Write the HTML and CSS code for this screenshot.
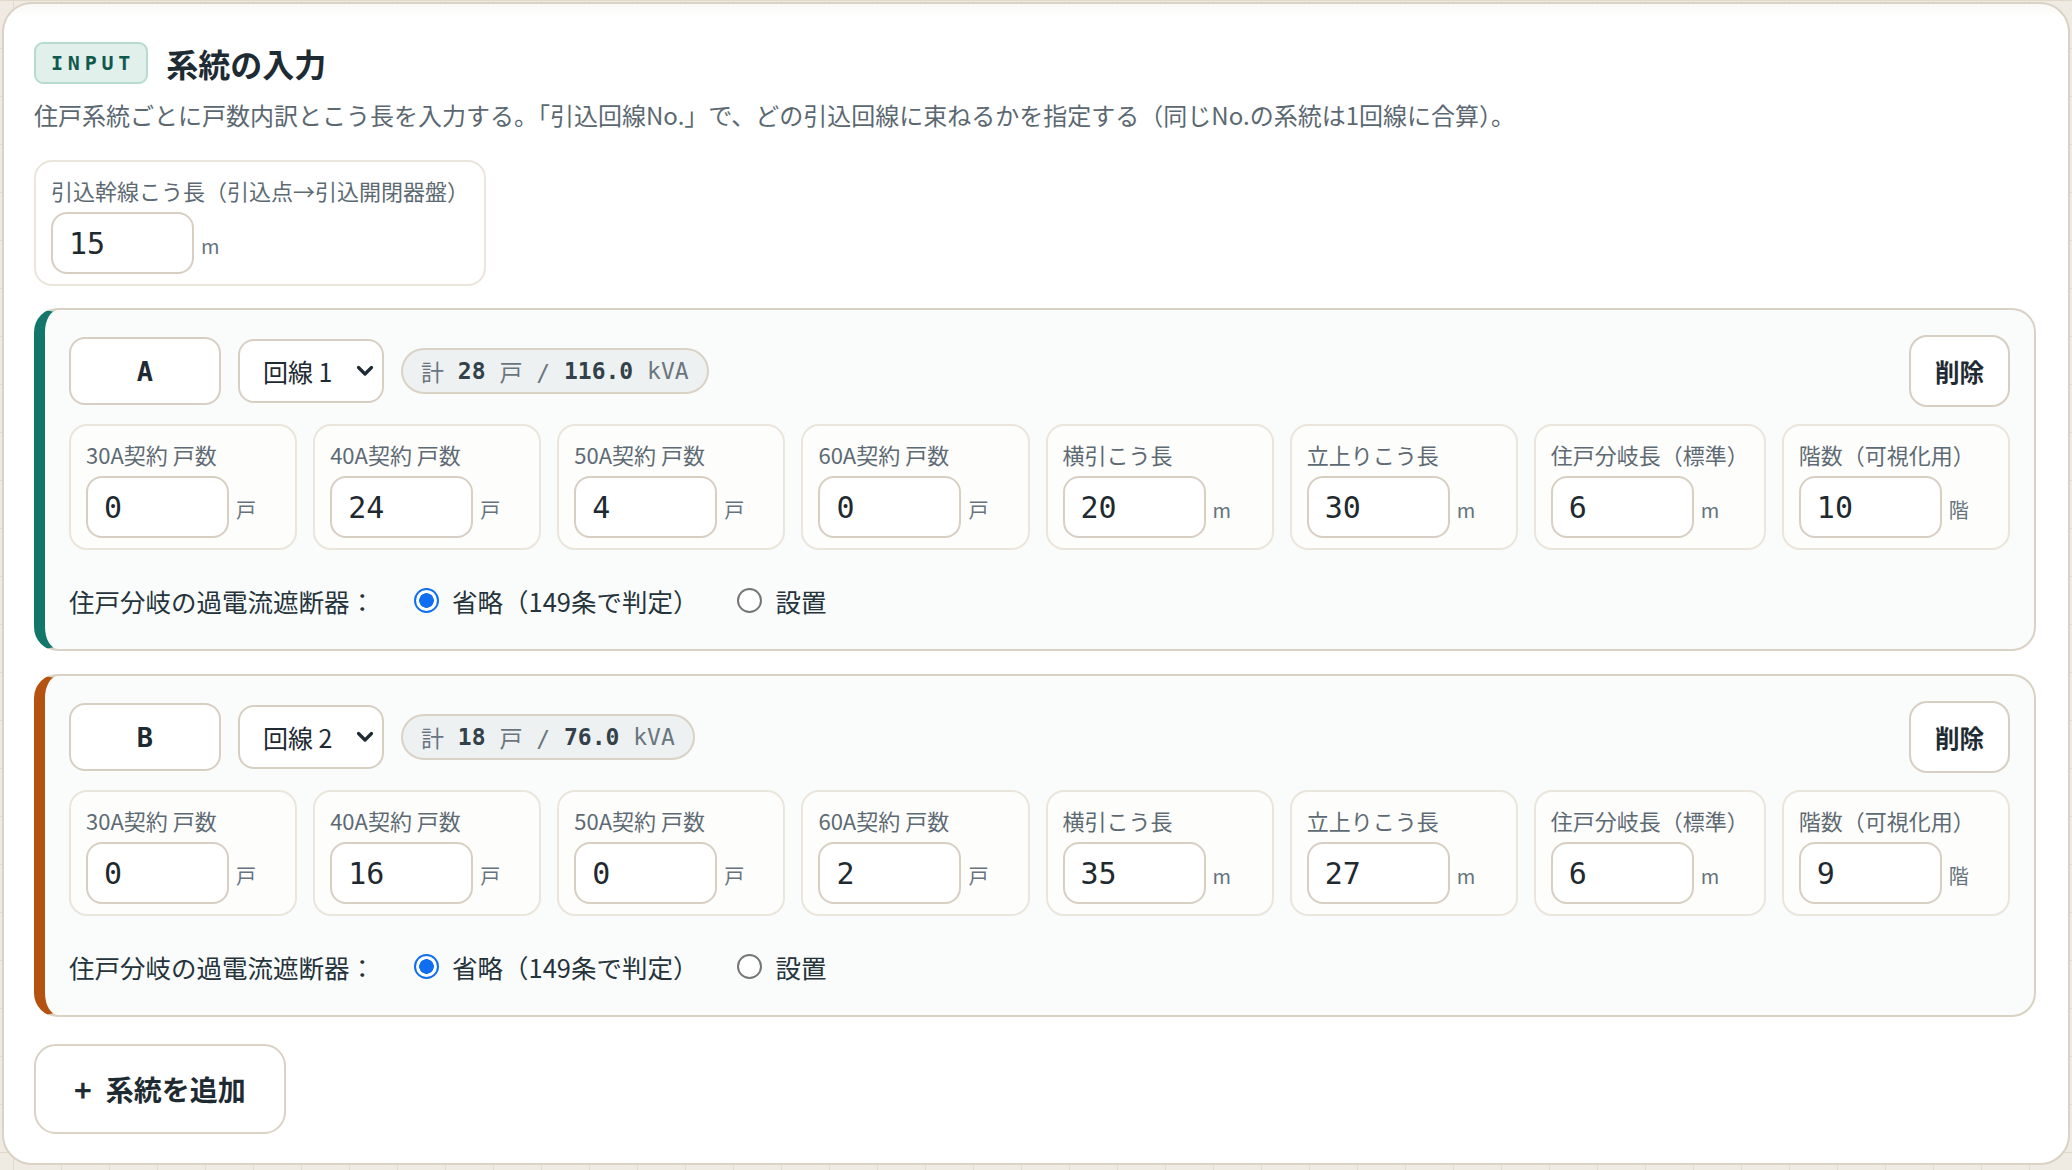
FILE: index.html
```html
<!DOCTYPE html>
<html lang="ja">
<head>
    <meta charset="UTF-8">
    <meta name="viewport" content="width=device-width, initial-scale=1.0">
    <title>系統の入力</title>
    <link rel="stylesheet" href="styles.css">
</head>
<body>
    <section class="panel">
        <div class="panel_head">
            <span class="tag">INPUT</span>
            <h2>系統の入力</h2>
        </div>
        <p class="lead">住戸系統ごとに戸数内訳とこう長を入力する。「引込回線No.」で、どの引込回線に束ねるかを指定する（同じNo.の系統は1回線に合算）。</p>

        <div class="field feed">
            <label class="field_label" for="feed_len">引込幹線こう長（引込点→引込開閉器盤）</label>
            <div class="field_row">
                <input class="num" type="number" id="feed_len" value="15">
                <span class="unit">m</span>
            </div>
        </div>

        <!-- system A -->
        <div class="system sys_a">
            <div class="sys_head">
                <input class="sys_name" type="text" value="A">
                <select class="line_sel">
                    <option selected>回線 1</option>
                    <option>回線 2</option>
                    <option>回線 3</option>
                </select>
                <span class="sum">計 <b>28</b> 戸 / <b>116.0</b> kVA</span>
                <button class="del_btn">削除</button>
            </div>
            <div class="fields">
                <div class="field">
                    <label class="field_label">30A契約 戸数</label>
                    <div class="field_row"><input class="num" type="number" value="0"><span class="unit">戸</span></div>
                </div>
                <div class="field">
                    <label class="field_label">40A契約 戸数</label>
                    <div class="field_row"><input class="num" type="number" value="24"><span class="unit">戸</span></div>
                </div>
                <div class="field">
                    <label class="field_label">50A契約 戸数</label>
                    <div class="field_row"><input class="num" type="number" value="4"><span class="unit">戸</span></div>
                </div>
                <div class="field">
                    <label class="field_label">60A契約 戸数</label>
                    <div class="field_row"><input class="num" type="number" value="0"><span class="unit">戸</span></div>
                </div>
                <div class="field">
                    <label class="field_label">横引こう長</label>
                    <div class="field_row"><input class="num" type="number" value="20"><span class="unit">m</span></div>
                </div>
                <div class="field">
                    <label class="field_label">立上りこう長</label>
                    <div class="field_row"><input class="num" type="number" value="30"><span class="unit">m</span></div>
                </div>
                <div class="field">
                    <label class="field_label">住戸分岐長（標準）</label>
                    <div class="field_row"><input class="num" type="number" value="6"><span class="unit">m</span></div>
                </div>
                <div class="field">
                    <label class="field_label">階数（可視化用）</label>
                    <div class="field_row"><input class="num" type="number" value="10"><span class="unit">階</span></div>
                </div>
            </div>
            <div class="breaker">
                <span>住戸分岐の過電流遮断器：</span>
                <label class="opt"><input type="radio" name="brk_a" checked><span>省略（149条で判定）</span></label>
                <label class="opt"><input type="radio" name="brk_a"><span>設置</span></label>
            </div>
        </div>

        <!-- system B -->
        <div class="system sys_b">
            <div class="sys_head">
                <input class="sys_name" type="text" value="B">
                <select class="line_sel">
                    <option>回線 1</option>
                    <option selected>回線 2</option>
                    <option>回線 3</option>
                </select>
                <span class="sum">計 <b>18</b> 戸 / <b>76.0</b> kVA</span>
                <button class="del_btn">削除</button>
            </div>
            <div class="fields">
                <div class="field">
                    <label class="field_label">30A契約 戸数</label>
                    <div class="field_row"><input class="num" type="number" value="0"><span class="unit">戸</span></div>
                </div>
                <div class="field">
                    <label class="field_label">40A契約 戸数</label>
                    <div class="field_row"><input class="num" type="number" value="16"><span class="unit">戸</span></div>
                </div>
                <div class="field">
                    <label class="field_label">50A契約 戸数</label>
                    <div class="field_row"><input class="num" type="number" value="0"><span class="unit">戸</span></div>
                </div>
                <div class="field">
                    <label class="field_label">60A契約 戸数</label>
                    <div class="field_row"><input class="num" type="number" value="2"><span class="unit">戸</span></div>
                </div>
                <div class="field">
                    <label class="field_label">横引こう長</label>
                    <div class="field_row"><input class="num" type="number" value="35"><span class="unit">m</span></div>
                </div>
                <div class="field">
                    <label class="field_label">立上りこう長</label>
                    <div class="field_row"><input class="num" type="number" value="27"><span class="unit">m</span></div>
                </div>
                <div class="field">
                    <label class="field_label">住戸分岐長（標準）</label>
                    <div class="field_row"><input class="num" type="number" value="6"><span class="unit">m</span></div>
                </div>
                <div class="field">
                    <label class="field_label">階数（可視化用）</label>
                    <div class="field_row"><input class="num" type="number" value="9"><span class="unit">階</span></div>
                </div>
            </div>
            <div class="breaker">
                <span>住戸分岐の過電流遮断器：</span>
                <label class="opt"><input type="radio" name="brk_b" checked><span>省略（149条で判定）</span></label>
                <label class="opt"><input type="radio" name="brk_b"><span>設置</span></label>
            </div>
        </div>

        <button class="add_btn"><span class="plus">+</span>系統を追加</button>
    </section>
</body>
</html>
```

FILE: styles.css
```css
* {
    margin: 0;
    padding: 0;
    box-sizing: border-box;
}

body {
    margin: 2px;
    background-color: #efebe3;
    background-image: linear-gradient(90deg, #e0d9cc 1px, transparent 1px),
        linear-gradient(#e0d9cc 1px, transparent 1px);
    background-size: 48px 48px;
    background-position: 13px 0;
    font-family: "Noto Sans CJK JP", "Noto Sans", sans-serif;
    color: #1f2b33;
}

.panel {
    background: linear-gradient(#f8f8f6, #fff 14px);
    border: 2px solid #d9d2c5;
    border-radius: 30px;
    padding: 38px 32px 29px 30px;
}

.panel_head {
    display: flex;
    align-items: center;
    gap: 18px;
    height: 42px;
}

.tag {
    display: flex;
    align-items: center;
    height: 42px;
    padding: 0 11px 0 15px;
    background-color: #e2f0ec;
    border: 2px solid #b8dbd1;
    border-radius: 9px;
    color: #0f5a4d;
    font-family: "DejaVu Sans Mono", monospace;
    font-weight: bold;
    font-size: 20px;
    letter-spacing: 0.24em;
}

.panel_head h2 {
    font-size: 32px;
    font-weight: 700;
    color: #1f2b33;
}

.lead {
    margin-top: 14px;
    font-size: 24px;
    line-height: 34px;
    color: #5b6871;
    white-space: nowrap;
}

/* shared input box */
.field {
    border: 2px solid #ebe6dc;
    border-radius: 18px;
    background-color: #fdfdfc;
    padding: 14px 15px 10px;
}

.feed {
    width: fit-content;
    margin-top: 28px;
    background-color: #fff;
}

.field_label {
    display: block;
    font-size: 22px;
    line-height: 28px;
    color: #5d6a73;
    white-space: nowrap;
}

.field_row {
    display: flex;
    align-items: baseline;
    gap: 7px;
    margin-top: 8px;
}

.num {
    width: 143px;
    height: 62px;
    padding: 0 12px 0 16px;
    border: 2px solid #d7cfc2;
    border-radius: 16px;
    background: #fff;
    font-family: "DejaVu Sans Mono", monospace;
    font-size: 30px;
    color: #1f2a30;
    outline: none;
    -moz-appearance: textfield;
}

.num::-webkit-inner-spin-button,
.num::-webkit-outer-spin-button {
    -webkit-appearance: none;
    margin: 0;
}

.unit {
    font-size: 20px;
    color: #66737c;
}

/* system group */
.system {
    margin-top: 22px;
    background-color: #fafbfb;
    border: 2px solid #d9d2c4;
    border-left: 11px solid #13766a;
    border-radius: 24px;
    padding: 25px 24px 31px 24px;
}

.system + .system {
    margin-top: 23px;
}

.sys_b {
    border-left-color: #b4520f;
}

.sys_head {
    display: flex;
    align-items: center;
    gap: 17px;
    height: 72px;
}

.sys_name {
    width: 152px;
    height: 68px;
    border: 2px solid #d7cfc2;
    border-radius: 16px;
    background: #fff;
    text-align: center;
    font-family: "DejaVu Sans Mono", monospace;
    font-weight: bold;
    font-size: 27px;
    color: #1f2b33;
    outline: none;
}

.line_sel {
    -webkit-appearance: none;
    appearance: none;
    width: 146px;
    height: 64px;
    padding-left: 23px;
    border: 2px solid #d7cfc2;
    border-radius: 16px;
    background: #fff url("data:image/svg+xml,%3Csvg xmlns='http://www.w3.org/2000/svg' viewBox='0 0 18 12'%3E%3Cpolyline points='2.5,2.5 9,9 15.5,2.5' fill='none' stroke='%231f2b33' stroke-width='3.2' stroke-linecap='round' stroke-linejoin='round'/%3E%3C/svg%3E") no-repeat right 8px center / 18px 12px;
    font-family: "Noto Sans CJK JP", sans-serif;
    font-size: 25px;
    color: #1f2b33;
    outline: none;
}

.sum {
    display: flex;
    align-items: center;
    height: 46px;
    padding: 0 18px;
    border: 2px solid #d9d2c5;
    border-radius: 23px;
    background-color: #eef1f2;
    font-family: "DejaVu Sans Mono", "Noto Sans CJK JP", monospace;
    font-size: 23px;
    color: #6a767e;
    white-space: pre;
}

.sum b {
    color: #33414a;
}

.del_btn {
    margin-left: auto;
    height: 72px;
    padding: 0 24px;
    border: 2px solid #d7cfc2;
    border-radius: 18px;
    background: #fff;
    font-family: "Noto Sans CJK JP", sans-serif;
    font-weight: bold;
    font-size: 24.5px;
    color: #1f2b33;
    cursor: pointer;
}

.fields {
    display: grid;
    grid-template-columns: repeat(8, 1fr);
    gap: 16px;
    margin-top: 17px;
}

.breaker {
    display: flex;
    align-items: center;
    gap: 39px;
    height: 36px;
    margin-top: 32px;
    font-size: 25.5px;
    color: #25333b;
}

.opt {
    display: flex;
    align-items: center;
    gap: 13px;
    cursor: pointer;
}

.opt input {
    -webkit-appearance: none;
    appearance: none;
    width: 25px;
    height: 25px;
    border: 2px solid #767676;
    border-radius: 50%;
    background: #fff;
}

.opt input:checked {
    border: 2.5px solid #0f6ff0;
    background: radial-gradient(circle, #0f6ff0 0 7px, #fff 7.6px);
}

.add_btn {
    display: flex;
    align-items: center;
    gap: 14px;
    height: 90px;
    margin-top: 27px;
    padding: 0 38px;
    border: 2px solid #d9d2c5;
    border-radius: 22px;
    background: #fff;
    font-family: "Noto Sans CJK JP", sans-serif;
    font-weight: bold;
    font-size: 28px;
    color: #1f2b33;
    cursor: pointer;
}

.plus {
    font-size: 30px;
}
```
